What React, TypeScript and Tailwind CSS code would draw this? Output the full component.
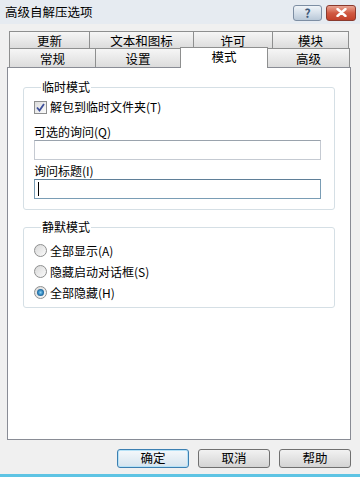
export default function App() {
  const font = { fontFamily: '"Noto Sans CJK SC", "Liberation Sans", sans-serif' };
  const row1 = [
    { label: "更新", w: "w-[80px]" },
    { label: "文本和图标", w: "w-[104px]" },
    { label: "许可", w: "w-[79px]" },
    { label: "模块", w: "w-[77px] border-r" },
  ];

  return (
    <div style={font} className="w-[360px] h-[477px] bg-[#f0f0f0] flex flex-col text-[12px] text-black overflow-hidden">
      {/* title bar */}
      <div className="h-[24px] flex items-center justify-between bg-[#e6ebf1] pl-[5px] pr-[4px]">
        <span className="text-[12.5px] leading-none">高级自解压选项</span>
        <div className="flex gap-[4px] mt-[1px]">
          <div className="w-[29px] h-[16px] rounded-[3px] border border-[#7d8ea3] bg-linear-to-b from-[#f0f4f8] via-[#d6e0ea] to-[#b9c8d8] flex items-center justify-center text-[12px] font-bold text-[#3f5a7a] leading-none">?</div>
          <div className="w-[30px] h-[16px] rounded-[3px] border border-[#8a3a2e] bg-linear-to-b from-[#e8a493] via-[#d15a43] to-[#c2402a] flex items-center justify-center">
            <svg width="11" height="9" viewBox="0 0 11 9">
              <path d="M1.5 1 L9.5 8 M9.5 1 L1.5 8" stroke="#ffffff" strokeWidth="2.4" strokeLinecap="round" />
            </svg>
          </div>
        </div>
      </div>

      {/* tabs */}
      <div className="mt-[7px] pl-[9px]">
        <div className="flex h-[17px]">
          {row1.map((t) => (
            <div key={t.label} className={`${t.w} h-full border-t border-l border-[#8e8f8f] bg-linear-to-b from-[#f6f6f6] to-[#dcdcdc] flex items-center justify-center pt-[2px] text-[12.5px] leading-none`}>
              {t.label}
            </div>
          ))}
        </div>
        <div className="flex h-[19px] items-end">
          <div className="w-[86px] h-full border-t border-l border-[#8e8f8f] bg-linear-to-b from-[#f6f6f6] to-[#dcdcdc] flex items-center justify-center pt-[2px] text-[12.5px] leading-none">常规</div>
          <div className="w-[85px] h-full border-t border-l border-[#8e8f8f] bg-linear-to-b from-[#f6f6f6] to-[#dcdcdc] flex items-center justify-center pt-[2px] text-[12.5px] leading-none">设置</div>
          <div className="relative z-10 w-[88px] h-[21px] -mb-px border-t border-l border-r border-[#8e8f8f] bg-white flex items-start justify-center pt-[3px] text-[12.5px] leading-none">模式</div>
          <div className="w-[82px] h-full border-t border-r border-[#8e8f8f] bg-linear-to-b from-[#f6f6f6] to-[#dcdcdc] flex items-center justify-center pt-[3px] text-[12.5px] leading-none">高级</div>
        </div>
      </div>

      {/* panel */}
      <div className="ml-[7px] w-[344px] h-[373px] border border-[#898c95] bg-white px-[15px] pt-[11px]">
        <fieldset className="border border-[#d5dfe5] rounded-[3px] pl-[10px] pb-[10px]">
          <legend className="ml-[7px] px-[1px] leading-[16px]">临时模式</legend>
          <div className="flex items-center h-[16px] mt-[4px]">
            <div className="w-[13px] h-[13px] border border-[#8e8f8f] bg-linear-to-br from-[#dcdcdc] to-[#fbfbfb] flex items-center justify-center">
              <svg width="9" height="9" viewBox="0 0 9 9">
                <path d="M1 4.5 L3.5 7.5 L8 1" stroke="#3d4f9a" strokeWidth="1.8" fill="none" />
              </svg>
            </div>
            <span className="ml-[3px] leading-none">解包到临时文件夹(T)</span>
          </div>
          <div className="mt-[9px] h-[16px] flex items-center leading-none">可选的询问(Q)</div>
          <div className="w-[287px] h-[20px] border border-[#c5cad2] border-t-[#9aa3ad] bg-white" />
          <div className="mt-[3px] h-[16px] flex items-center leading-none">询问标题(I)</div>
          <div className="w-[287px] h-[20px] border border-[#7a9db5] border-t-[#5f7f98] bg-white flex items-center pl-[3px]">
            <div className="w-px h-[14px] bg-black" />
          </div>
        </fieldset>

        <fieldset className="mt-[9px] border border-[#d5dfe5] rounded-[3px] pl-[10px] pb-[4px]">
          <legend className="ml-[7px] px-[1px] leading-[16px]">静默模式</legend>
          {[
            { label: "全部显示(A)", on: false },
            { label: "隐藏启动对话框(S)", on: false },
            { label: "全部隐藏(H)", on: true },
          ].map((r, i) => (
            <div key={r.label} className={`flex items-center h-[21px] ${i === 0 ? "mt-[5px]" : ""}`}>
              <div className="w-[13px] h-[13px] rounded-full border border-[#8e8f8f] bg-linear-to-br from-[#d8d8d8] to-[#fbfbfb] flex items-center justify-center">
                {r.on && <div className="w-[7px] h-[7px] rounded-full bg-radial from-[#8ad4f6] via-[#2a7fb8] to-[#0f3f6b]" />}
              </div>
              <span className="ml-[3px] leading-none">{r.label}</span>
            </div>
          ))}
        </fieldset>
      </div>

      {/* buttons */}
      <div className="flex justify-end gap-[9px] pr-[9px] mt-[9px]">
        <button className="w-[72px] h-[19px] rounded-[3px] border border-[#3c7fb1] shadow-[inset_0_0_0_1px_#b6e2f7] bg-linear-to-b from-[#f4f8fb] to-[#d6e4ee] leading-none text-[12.5px]">确定</button>
        <button className="w-[72px] h-[19px] rounded-[3px] border border-[#707070] bg-linear-to-b from-[#f2f2f2] to-[#d4d4d4] leading-none text-[12.5px]">取消</button>
        <button className="w-[72px] h-[19px] rounded-[3px] border border-[#707070] bg-linear-to-b from-[#f2f2f2] to-[#d4d4d4] leading-none text-[12.5px]">帮助</button>
      </div>
      <div className="mt-auto h-[3px] bg-[#5ec4e4]" />
    </div>
  );
}
